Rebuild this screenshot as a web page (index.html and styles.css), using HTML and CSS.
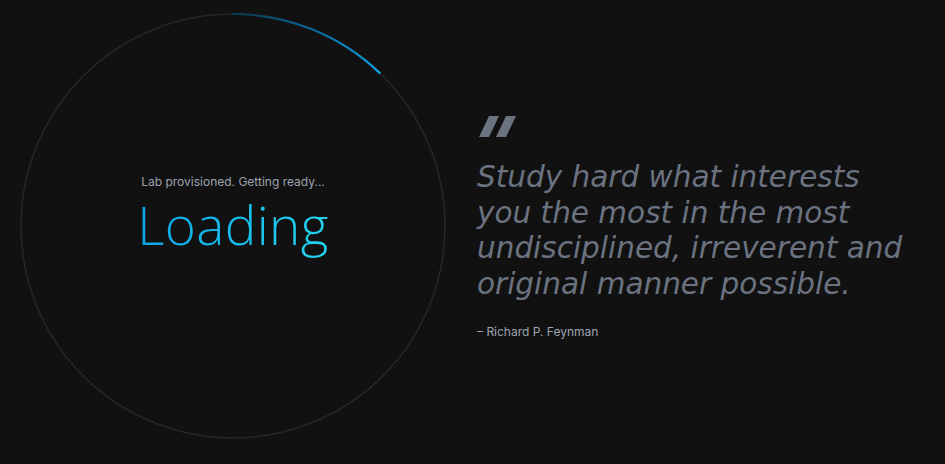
FILE: index.html
```html
<!DOCTYPE html>
<html>
<head>
<meta charset="utf-8">
<link rel="stylesheet" href="styles.css">
</head>
<body>
<main class="page">
  <section class="ring">
    <svg class="ring-svg" width="426" height="426" viewBox="0 0 426 426">
      <defs>
        <linearGradient id="arc" x1="0" y1="0" x2="1" y2="1">
          <stop offset="0" stop-color="#0b3a52"/>
          <stop offset="0.5" stop-color="#0a6fa6"/>
          <stop offset="1" stop-color="#0ea5e9"/>
        </linearGradient>
      </defs>
      <circle cx="213" cy="213" r="212" fill="none" stroke="#262626" stroke-width="1.6"/>
      <path d="M213 1 A212 212 0 0 1 359.6 59.9" fill="none" stroke="url(#arc)" stroke-width="2.2" stroke-linecap="round"/>
    </svg>
    <div class="ring-content">
      <p class="status">Lab provisioned. Getting ready...</p>
      <h1 class="loading">Loading</h1>
    </div>
  </section>
  <section class="quote">
    <svg class="quote-mark" width="38" height="21" viewBox="0 0 38 21">
      <polygon points="10,0 20,0 10,21 0,21" fill="#6b7280"/>
      <polygon points="27,0 37,0 27,21 17,21" fill="#6b7280"/>
    </svg>
    <blockquote class="quote-text">Study hard what interests<br>you the most in the most<br>undisciplined, irreverent and<br>original manner possible.</blockquote>
    <p class="author">– Richard P. Feynman</p>
  </section>
</main>
</body>
</html>
```

FILE: styles.css
```css
html, body {
  margin: 0;
  padding: 0;
  background: #111111;
}
.page {
  width: 945px;
  height: 464px;
  box-sizing: border-box;
  display: flex;
  align-items: center;
  padding-left: 20px;
  gap: 31px;
}
.ring {
  position: relative;
  width: 426px;
  height: 426px;
  flex: none;
  align-self: flex-start;
  margin-top: 13px;
}
.ring-svg {
  display: block;
}
.ring-content {
  position: absolute;
  inset: 0;
  display: flex;
  flex-direction: column;
  align-items: center;
  justify-content: center;
  padding-bottom: 16px;
  box-sizing: border-box;
}
.status {
  margin: 0;
  font-family: Inter, sans-serif;
  font-size: 12px;
  line-height: 14px;
  color: #9ca3af;
}
.loading {
  margin: 0;
  font-family: "Open Sans", sans-serif;
  font-weight: 300;
  font-size: 53px;
  line-height: 72px;
  letter-spacing: 0.4px;
  background: linear-gradient(90deg, #0ea5e9, #22d3ee);
  -webkit-background-clip: text;
  background-clip: text;
  color: transparent;
}
.quote {
  display: flex;
  flex-direction: column;
  margin-top: -6px;
}
.quote-mark {
  display: block;
  margin: -3px 0 23px 2px;
}
.quote-text {
  margin: 0;
  font-family: "DejaVu Sans", sans-serif;
  font-style: italic;
  font-size: 29.5px;
  line-height: 35.5px;
  color: #6b7280;
}
.author {
  margin: 22px 0 0 0;
  font-family: Inter, sans-serif;
  font-size: 12px;
  color: #9ca3af;
}
```
